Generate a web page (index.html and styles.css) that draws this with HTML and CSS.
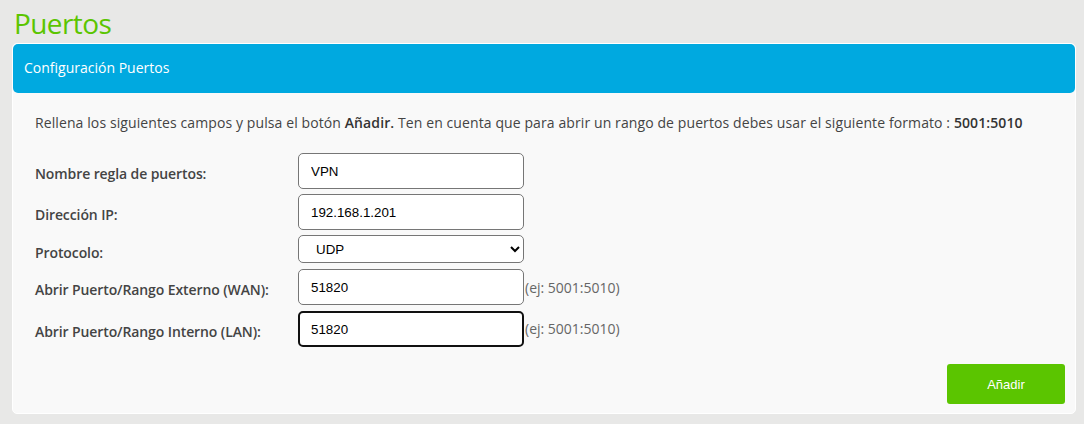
FILE: index.html
```html
<!DOCTYPE html>
<html lang="es">
  <head>
    <meta charset="UTF-8" />
    <title>Puertos</title>
    <link rel="stylesheet" href="styles.css">
  </head>
  <body>
    <h1 class="title">Puertos</h1>
    <div class="panel">
      <div class="panel-head">Configuración Puertos</div>
      <div class="panel-body">
        <p class="intro">Rellena los siguientes campos y pulsa el botón <b>Añadir.</b> Ten en cuenta que para abrir un rango de puertos debes usar el siguiente formato : <b>5001:5010</b></p>
        <form class="form">
          <label class="lbl" for="name">Nombre regla de puertos:</label>
          <div class="field"><input id="name" type="text" value="VPN" /></div>

          <label class="lbl" for="ip">Dirección IP:</label>
          <div class="field"><input id="ip" type="text" value="192.168.1.201" /></div>

          <label class="lbl" for="proto">Protocolo:</label>
          <div class="field">
            <select id="proto">
              <option>TCP</option>
              <option selected>UDP</option>
              <option>TCP/UDP</option>
            </select>
          </div>

          <label class="lbl" for="wan">Abrir Puerto/Rango Externo (WAN):</label>
          <div class="field"><input id="wan" type="text" value="51820" /><span class="hint">(ej: 5001:5010)</span></div>

          <label class="lbl" for="lan">Abrir Puerto/Rango Interno (LAN):</label>
          <div class="field"><input id="lan" class="focused" type="text" value="51820" /><span class="hint">(ej: 5001:5010)</span></div>
        </form>
        <div class="actions">
          <button class="btn" type="button">Añadir</button>
        </div>
      </div>
    </div>
  </body>
</html>
```

FILE: styles.css
```css
html,
body {
  height: 100%;
}
body {
  margin: 0;
  padding: 0 8px 0 12px;
  background: #e8e8e7;
  font-family: "Open Sans", "Noto Sans", sans-serif;
  color: #333;
}

.title {
  margin: 0;
  padding: 5px 0 0 2px;
  height: 38px;
  font-size: 28px;
  font-weight: 400;
  line-height: 36px;
  letter-spacing: -0.6px;
  color: #5bc500;
}

.panel {
  background: #f9f9f9;
  border: 1px solid #fff;
  border-radius: 5px;
}
.panel-head {
  height: 49px;
  line-height: 48px;
  padding-left: 11px;
  background: #00a9e0;
  border-radius: 5px;
  color: #fff;
  font-size: 14px;
}
.panel-body {
  padding: 19px 10px 9px 22px;
}

.intro {
  margin: 0 0 19px;
  font-size: 14px;
  line-height: 22px;
  color: #444;
  letter-spacing: 0.1px;
}
.intro b {
  font-weight: 600;
  color: #333;
}

.form {
  display: grid;
  grid-template-columns: 263px 1fr;
  row-gap: 5px;
  align-items: center;
}
.lbl {
  padding-top: 5px;
  font-size: 14px;
  font-weight: 600;
  color: #444;
  letter-spacing: -0.1px;
}
.field {
  display: flex;
  align-items: center;
}
.field input,
.field select {
  box-sizing: border-box;
  width: 226px;
  height: 36px;
  margin: 0;
  padding: 0 12px;
  border: 1px solid #767676;
  border-radius: 5px;
  background: #fff;
  font-family: "Liberation Sans", Arial, sans-serif;
  font-size: 13.33px;
  color: #000;
  outline: none;
}
.field select {
  height: 28px;
  margin-bottom: 1px;
  padding: 0 0 0 13px;
}
.field input.focused {
  border: 2px solid #111;
  padding-left: 11px;
  margin-top: 1px;
}
.hint {
  padding-left: 1px;
  font-size: 14px;
  color: #666;
}

.actions {
  display: flex;
  justify-content: flex-end;
  margin-top: 17px;
}
.btn {
  width: 118px;
  height: 40px;
  border: 0;
  border-radius: 3px;
  background: #5bc500;
  color: #fff;
  font-family: "Liberation Sans", Arial, sans-serif;
  font-size: 13px;
  cursor: pointer;
}
```
